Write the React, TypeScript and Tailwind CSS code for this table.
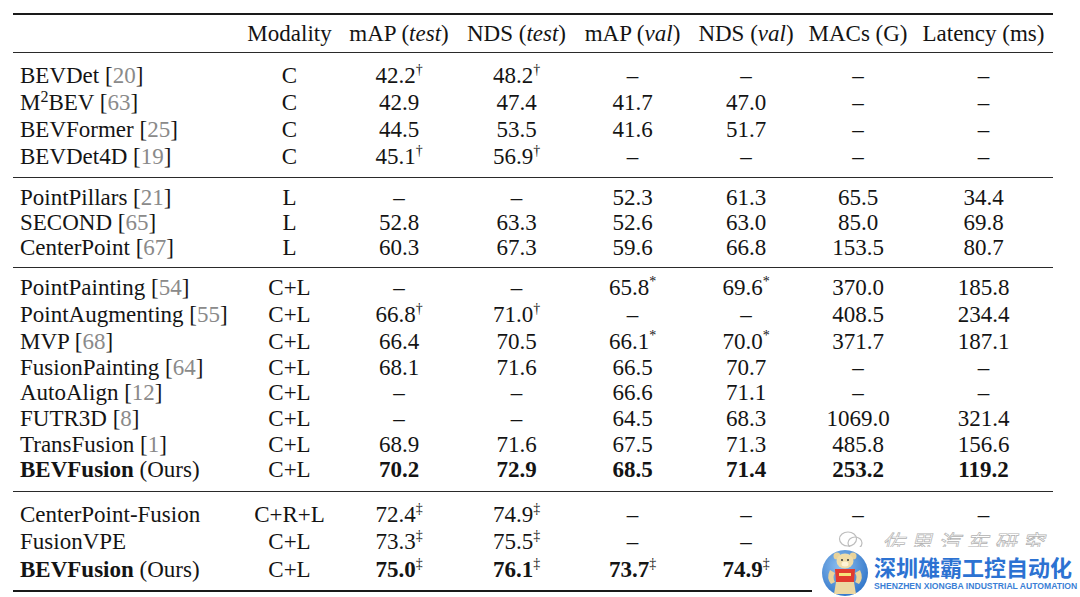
import React from "react";

type Row = { name: string; cite?: string; m2?: boolean; bold?: boolean; h: number; cells: string[] };

const g1: Row[] = [
  { name: "BEVDet", cite: "20", h: 27, cells: ["C", "42.2†", "48.2†", "–", "–", "–", "–"] },
  { name: "BEV", m2: true, cite: "63", h: 27, cells: ["C", "42.9", "47.4", "41.7", "47.0", "–", "–"] },
  { name: "BEVFormer", cite: "25", h: 27, cells: ["C", "44.5", "53.5", "41.6", "51.7", "–", "–"] },
  { name: "BEVDet4D", cite: "19", h: 27, cells: ["C", "45.1†", "56.9†", "–", "–", "–", "–"] },
];

const g2: Row[] = [
  { name: "PointPillars", cite: "21", h: 25, cells: ["L", "–", "–", "52.3", "61.3", "65.5", "34.4"] },
  { name: "SECOND", cite: "65", h: 25, cells: ["L", "52.8", "63.3", "52.6", "63.0", "85.0", "69.8"] },
  { name: "CenterPoint", cite: "67", h: 25, cells: ["L", "60.3", "67.3", "59.6", "66.8", "153.5", "80.7"] },
];

const g3: Row[] = [
  { name: "PointPainting", cite: "54", h: 26, cells: ["C+L", "–", "–", "65.8*", "69.6*", "370.0", "185.8"] },
  { name: "PointAugmenting", cite: "55", h: 28, cells: ["C+L", "66.8†", "71.0†", "–", "–", "408.5", "234.4"] },
  { name: "MVP", cite: "68", h: 26, cells: ["C+L", "66.4", "70.5", "66.1*", "70.0*", "371.7", "187.1"] },
  { name: "FusionPainting", cite: "64", h: 26, cells: ["C+L", "68.1", "71.6", "66.5", "70.7", "–", "–"] },
  { name: "AutoAlign", cite: "12", h: 25, cells: ["C+L", "–", "–", "66.6", "71.1", "–", "–"] },
  { name: "FUTR3D", cite: "8", h: 26, cells: ["C+L", "–", "–", "64.5", "68.3", "1069.0", "321.4"] },
  { name: "TransFusion", cite: "1", h: 26, cells: ["C+L", "68.9", "71.6", "67.5", "71.3", "485.8", "156.6"] },
  { name: "BEVFusion", bold: true, h: 25, cells: ["C+L", "!70.2", "!72.9", "!68.5", "!71.4", "!253.2", "!119.2"] },
];

const g4: Row[] = [
  { name: "CenterPoint-Fusion", h: 26, cells: ["C+R+L", "72.4‡", "74.9‡", "–", "–", "–", "–"] },
  { name: "FusionVPE", h: 28, cells: ["C+L", "73.3‡", "75.5‡", "–", "–", "–", "–"] },
  { name: "BEVFusion", bold: true, h: 28, cells: ["C+L", "!75.0‡", "!76.1‡", "!73.7‡", "!74.9‡", "–", "–"] },
];

const cols = "grid grid-cols-[226px_101px_118px_117px_115px_112px_112px_139px] items-center";

function Value({ raw }: { raw: string }) {
  let v = raw;
  const bold = v.startsWith("!");
  if (bold) v = v.slice(1);
  let sup = "";
  const last = v.slice(-1);
  if (v.length > 1 && "†‡*".includes(last)) {
    sup = last;
    v = v.slice(0, -1);
  }
  return (
    <span className={bold ? "font-bold" : ""}>
      {v}
      {sup && <sup className="text-[14px] top-[-9px] font-normal">{sup}</sup>}
    </span>
  );
}

function Name({ r }: { r: Row }) {
  return (
    <div className="pl-[7px] whitespace-nowrap">
      {r.m2 && (
        <>
          M<sup className="text-[16px] top-[-8px]">2</sup>
        </>
      )}
      {r.bold ? <span className="font-bold">{r.name}</span> : r.name}
      {r.bold && " (Ours)"}
      {r.cite && (
        <>
          {" "}[<span className="text-[#8a8a8a]">{r.cite}</span>]
        </>
      )}
    </div>
  );
}

function Group({ rows, pt, pb }: { rows: Row[]; pt: string; pb: string }) {
  return (
    <div className={`${pt} ${pb}`}>
      {rows.map((r) => (
        <div key={r.name + r.cells[1]} className={cols} style={{ height: r.h }}>
          <Name r={r} />
          {r.cells.map((c, i) => (
            <div key={i} className="text-center whitespace-nowrap">
              <Value raw={c} />
            </div>
          ))}
        </div>
      ))}
    </div>
  );
}

function Bear() {
  return (
    <svg width="48" height="50" viewBox="0 0 48 50">
      <defs>
        <radialGradient id="bg" cx="0.4" cy="0.35" r="0.7">
          <stop offset="0" stopColor="#8fc0f0" />
          <stop offset="1" stopColor="#2f74c8" />
        </radialGradient>
      </defs>
      <circle cx="24" cy="25" r="23" fill="url(#bg)" />
      <circle cx="16" cy="8" r="3.5" fill="#e9d39a" />
      <circle cx="32" cy="8" r="3.5" fill="#e9d39a" />
      <ellipse cx="24" cy="13" rx="8.5" ry="7.5" fill="#f0dca8" />
      <ellipse cx="24" cy="16" rx="3.5" ry="2.5" fill="#fff3d6" />
      <circle cx="21" cy="12" r="1" fill="#333" />
      <circle cx="27" cy="12" r="1" fill="#333" />
      <path d="M9 22 Q5 30 10 36 L14 34 Q11 29 14 25 Z" fill="#ead49c" />
      <path d="M39 22 Q43 30 38 36 L34 34 Q37 29 34 25 Z" fill="#ead49c" />
      <path d="M14 21 L34 21 L33 34 L15 34 Z" fill="#e23b2e" />
      <rect x="18" y="25" width="12" height="3" fill="#f7e27a" />
      <path d="M15 34 L33 34 L35 46 L13 46 Z" fill="#ecd8a2" />
    </svg>
  );
}

export default function App() {
  return (
    <div
      className="relative w-[1080px] h-[597px] overflow-hidden bg-white text-[23px] text-[#141414] leading-none"
      style={{ fontFamily: '"Liberation Serif", "Times New Roman", serif' }}
    >
      <div className="ml-[13px] w-[1040px] pt-[13px]">
        <div className="h-[2px] bg-[#1a1a1a]" />
        <div className={`${cols} h-[26px] mt-[5px] mb-[6px]`}>
          <div />
          <div className="text-center">Modality</div>
          <div className="text-center">
            mAP (<i>test</i>)
          </div>
          <div className="text-center">
            NDS (<i>test</i>)
          </div>
          <div className="text-center">
            mAP (<i>val</i>)
          </div>
          <div className="text-center">
            NDS (<i>val</i>)
          </div>
          <div className="text-center">MACs (G)</div>
          <div className="text-center">Latency (ms)</div>
        </div>
        <div className="h-px bg-[#2a2a2a]" />
        <Group rows={g1} pt="pt-[9px]" pb="pb-[7px]" />
        <div className="h-px bg-[#2a2a2a]" />
        <Group rows={g2} pt="pt-[7px]" pb="pb-[7px]" />
        <div className="h-px bg-[#2a2a2a]" />
        <Group rows={g3} pt="pt-[6px]" pb="pb-[9px]" />
        <div className="h-px bg-[#2a2a2a]" />
        <Group rows={g4} pt="pt-[9px]" pb="pb-[7px]" />
        <div className="h-[2px] bg-[#1a1a1a]" />
      </div>

      {/* watermark */}
      <div className="absolute left-[836px] top-[528px] flex items-center gap-[18px] bg-white px-[2px] h-[26px]">
        <svg width="26" height="22" viewBox="0 0 26 22" fill="none" stroke="#bdbdbd" strokeWidth="1.2">
          <ellipse cx="10" cy="9" rx="8.5" ry="7" />
          <ellipse cx="17" cy="13" rx="7" ry="6" />
        </svg>
        <span
          className="text-[22px] italic tracking-[6px] text-white [-webkit-text-stroke:0.7px_#b0b0b0] whitespace-nowrap"
          style={{ fontFamily: '"Noto Sans CJK SC", sans-serif' }}
        >
          佐思汽车研究
        </span>
      </div>

      {/* logo */}
      <div className="absolute left-[812px] top-[547px] w-[268px] h-[50px] bg-white flex items-start">
        <div className="ml-[9px] mt-[1px] shrink-0">
          <Bear />
        </div>
        <div className="ml-[5px] flex flex-col" style={{ fontFamily: '"Noto Sans CJK SC", "Liberation Sans", sans-serif' }}>
          <span className="text-[22px] font-bold leading-[24px] text-[#2c72d2] mt-[7px] whitespace-nowrap">
            深圳雄霸工控自动化
          </span>
          <span
            className="text-[8.6px] font-bold leading-[10px] text-[#3b7fd6] mt-[3px] whitespace-nowrap"
            style={{ fontFamily: '"Liberation Sans", Arial, sans-serif' }}
          >
            SHENZHEN XIONGBA INDUSTRIAL AUTOMATION
          </span>
        </div>
      </div>
    </div>
  );
}
